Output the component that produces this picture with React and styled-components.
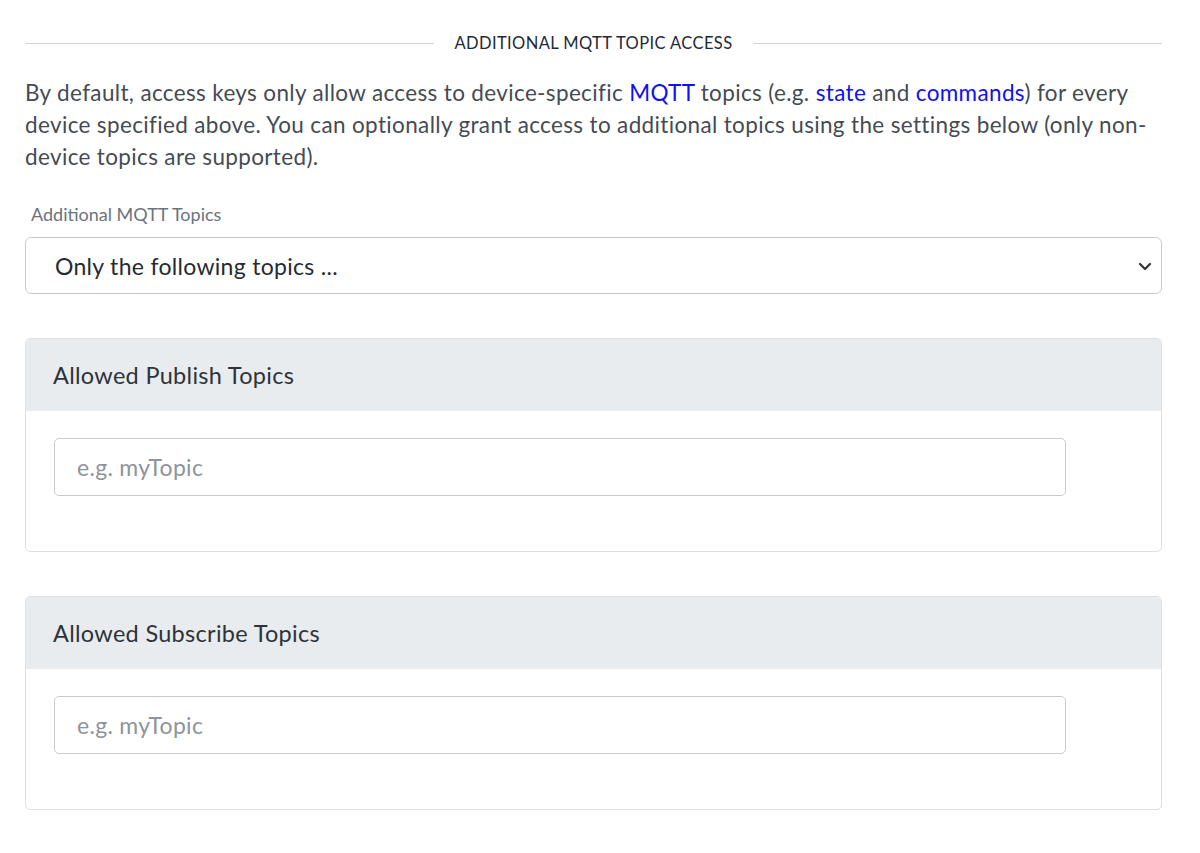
import React from "react";
import styled, { createGlobalStyle } from "styled-components";

const Global = createGlobalStyle`
  body { margin: 0; background: #fff; font-family: "Lato", "Liberation Sans", sans-serif; color: #3c4249; }
`;
const Page = styled.div`padding: 33px 38px 40px 25px;`;
const Divider = styled.div`
  display: flex; align-items: center; gap: 20px;
  font-size: 16.5px; letter-spacing: 0.4px; color: #1f2a37; text-transform: uppercase;
  &::before, &::after { content: ""; flex: 1; height: 1px; background: #cfd3d7; }
`;
const Para = styled.p`
  margin: 24px 0 0; font-size: 22.5px; letter-spacing: 0.35px; line-height: 32px; color: #454b52;
  a { color: #1010f0; text-decoration: none; }
`;
const Label = styled.div`margin: 30px 0 0 6px; font-size: 18px; color: #6b737b;`;
const SelectBox = styled.div`
  margin-top: 12px; height: 57px; box-sizing: border-box; border: 1px solid #c9ccd0; border-radius: 6px;
  display: flex; align-items: center; justify-content: space-between; padding: 0 8px 0 29px;
  font-size: 23px; letter-spacing: 0.3px; color: #262b31;
`;
const Card = styled.div`
  margin-top: 44px; border: 1px solid #dfe2e5; border-radius: 5px; overflow: hidden;
`;
const CardHead = styled.div`
  background: #e9ecef; height: 72px; display: flex; align-items: center; padding: 0 27px;
  font-size: 23.5px; letter-spacing: 0.3px; color: #2d3339;
`;
const CardBody = styled.div`padding: 27px 95px 55px 28px;`;
const Input = styled.div`
  height: 58px; box-sizing: border-box; border: 1px solid #c9ccd0; border-radius: 5px;
  display: flex; align-items: center; padding: 0 22px; font-size: 23px; letter-spacing: 0.3px; color: #8d949b;
`;

const TopicCard = ({ title }) => (
  <Card>
    <CardHead>{title}</CardHead>
    <CardBody><Input>e.g. myTopic</Input></CardBody>
  </Card>
);

export default function App() {
  return (
    <Page>
      <Global />
      <Divider>Additional MQTT Topic Access</Divider>
      <Para>
        By default, access keys only allow access to device-specific <a href="#">MQTT</a> topics (e.g. <a href="#">state</a> and <a href="#">commands</a>) for every device specified above. You can optionally grant access to additional topics using the settings below (only non-device topics are supported).
      </Para>
      <Label>Additional MQTT Topics</Label>
      <SelectBox>
        Only the following topics ...
        <svg width="16" height="16" viewBox="0 0 16 16"><path d="M3 6l5 5 5-5" fill="none" stroke="#333" strokeWidth="2.2" strokeLinecap="round" strokeLinejoin="round"/></svg>
      </SelectBox>
      <TopicCard title="Allowed Publish Topics" />
      <TopicCard title="Allowed Subscribe Topics" />
    </Page>
  );
}
